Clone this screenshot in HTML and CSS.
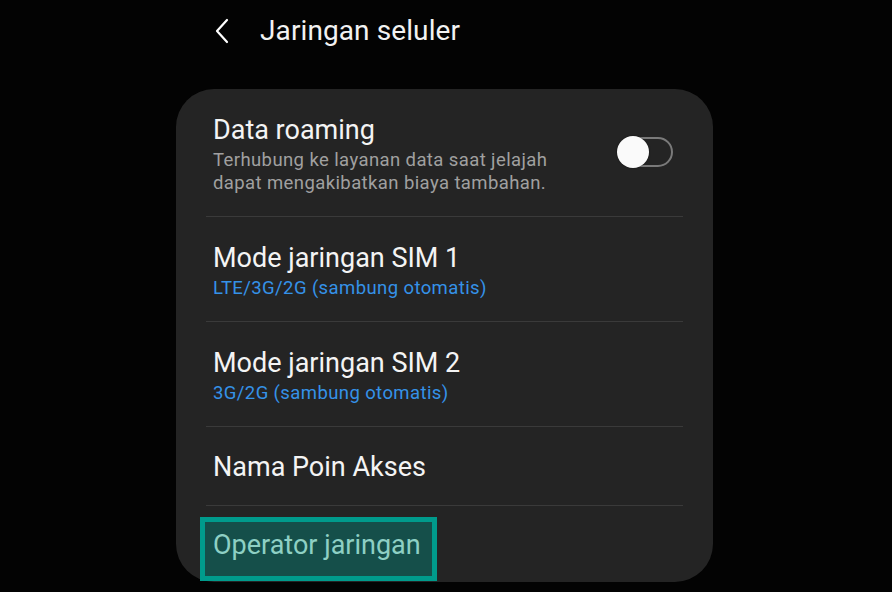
FILE: index.html
```html
<!DOCTYPE html>
<html lang="id">
<head>
<meta charset="utf-8">
<title>Jaringan seluler</title>
<link rel="stylesheet" href="styles.css">
</head>
<body>
<div class="screen">
  <header class="appbar">
    <span class="back" aria-label="Kembali">
      <svg width="16" height="26" viewBox="0 0 16 26"><path d="M13 2 L3 13 L13 24" fill="none" stroke="#fff" stroke-width="2.2" stroke-linecap="round" stroke-linejoin="round"/></svg>
    </span>
    <h1 class="title">Jaringan seluler</h1>
  </header>
  <section class="card">
    <div class="item item-first">
      <div class="texts">
        <div class="item-title">Data roaming</div>
        <div class="item-sub gray">Terhubung ke layanan data saat jelajah<br>dapat mengakibatkan biaya tambahan.</div>
      </div>
      <div class="switch"><span class="knob"></span></div>
    </div>
    <div class="divider"></div>
    <div class="item">
      <div class="texts">
        <div class="item-title">Mode jaringan SIM 1</div>
        <div class="item-sub blue">LTE/3G/2G (sambung otomatis)</div>
      </div>
    </div>
    <div class="divider"></div>
    <div class="item">
      <div class="texts">
        <div class="item-title">Mode jaringan SIM 2</div>
        <div class="item-sub blue">3G/2G (sambung otomatis)</div>
      </div>
    </div>
    <div class="divider"></div>
    <div class="item item-single">
      <div class="item-title">Nama Poin Akses</div>
    </div>
    <div class="divider"></div>
    <div class="item item-last">
      <div class="highlight"><span class="item-title hl-text">Operator jaringan</span></div>
    </div>
  </section>
</div>
</body>
</html>
```
FILE: styles.css
```css
* { box-sizing: border-box; }
html, body {
  margin: 0;
  padding: 0;
  background: #030303;
  font-family: Roboto, "Noto Sans", "Liberation Sans", sans-serif;
  color: #fff;
}
.screen {
  width: 892px;
  height: 592px;
  overflow: hidden;
}
.appbar {
  height: 89px;
  display: flex;
  align-items: flex-start;
  padding: 17px 0 0 214px;
}
.back {
  display: flex;
  width: 16px;
  height: 26px;
  margin-top: 1px;
}
.title {
  margin: 0 0 0 30px;
  font-weight: 400;
  font-size: 28px;
  line-height: 28px;
  color: #f2f2f2;
  letter-spacing: 0.1px;
}
.card {
  margin-left: 176px;
  width: 537px;
  height: 493px;
  background: #242424;
  border-radius: 38px;
  display: flex;
  flex-direction: column;
}
.item {
  display: flex;
  align-items: center;
  padding: 26px 30px 21px 37px;
}
.item-first {
  padding-top: 26px;
}
.texts {
  flex: 1;
  display: flex;
  flex-direction: column;
}
.item-title {
  font-size: 27px;
  line-height: 30px;
  color: #f4f4f4;
}
.item-sub {
  margin-top: 4px;
  font-size: 18.5px;
  line-height: 23px;
  letter-spacing: 0.4px;
}
.gray { color: #a0a0a0; }
.blue { color: #3592e8; }
.item-single {
  padding-top: 25px;
  padding-bottom: 23px;
}
.divider {
  height: 1px;
  margin: 0 30px;
  background: #3a3a3a;
}
.switch {
  position: relative;
  width: 52px;
  height: 30px;
  margin-right: 10px;
  margin-top: -6px;
  border: 2px solid #7a7a7a;
  border-radius: 15px;
}
.knob {
  position: absolute;
  left: -6px;
  top: -3px;
  width: 32px;
  height: 32px;
  border-radius: 50%;
  background: #fafafa;
  box-shadow: 0 0 2px rgba(0,0,0,0.6);
}
.item-last {
  padding: 11px 0 0 24px;
}
.highlight {
  width: 237px;
  height: 64px;
  border: 5px solid #009b8c;
  background: #154f4a;
  padding: 0 0 8px 8px;
  display: flex;
  align-items: center;
}
.hl-text {
  color: #8ed0c4;
}
```
